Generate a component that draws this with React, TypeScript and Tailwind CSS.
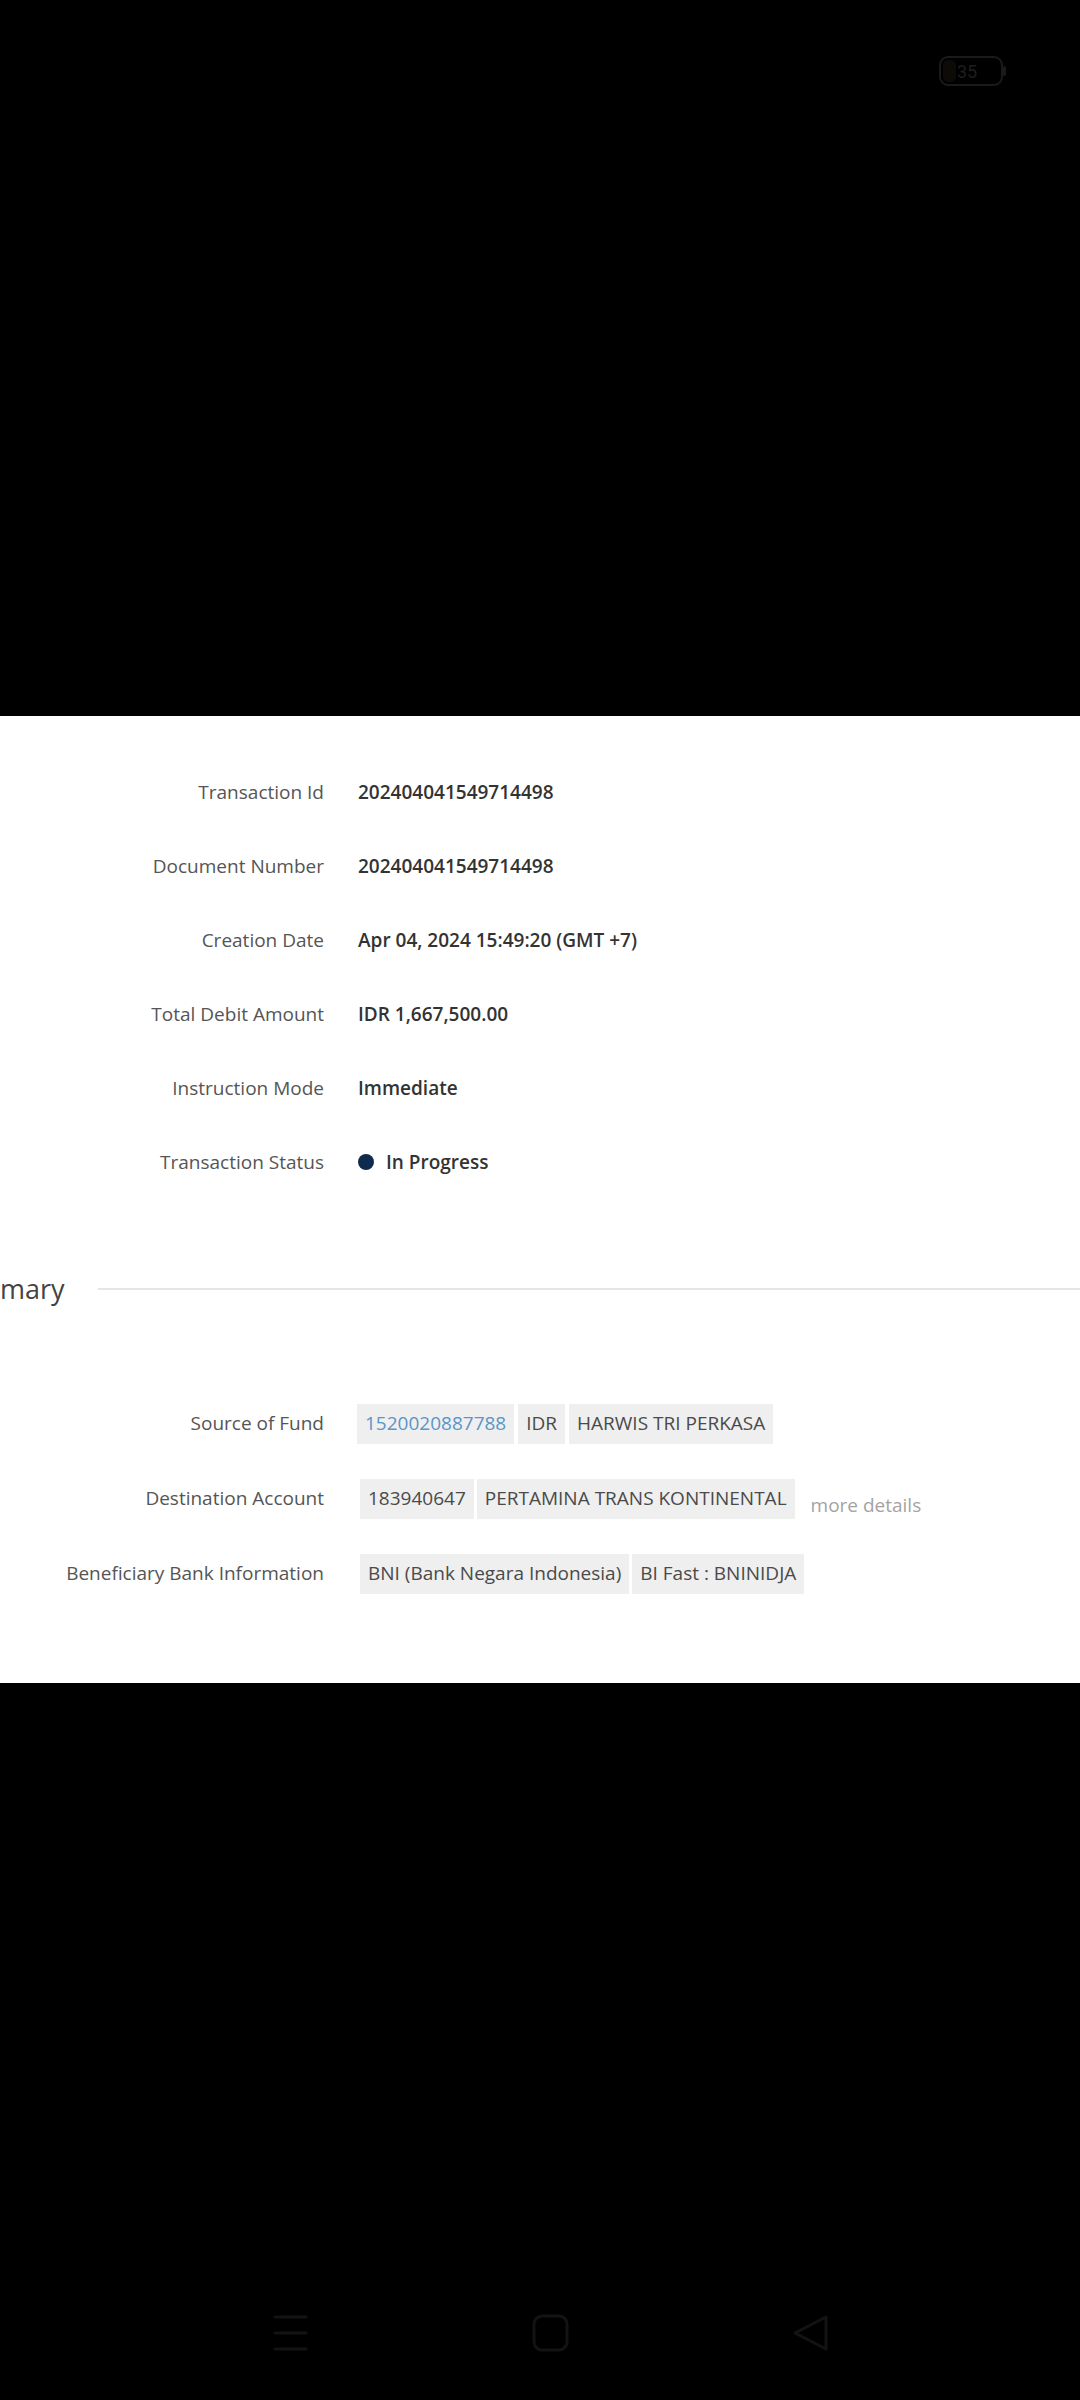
const summaryRows = [
  { label: "Transaction Id", value: "202404041549714498" },
  { label: "Document Number", value: "202404041549714498" },
  { label: "Creation Date", value: "Apr 04, 2024 15:49:20 (GMT +7)" },
  { label: "Total Debit Amount", value: "IDR 1,667,500.00" },
  { label: "Instruction Mode", value: "Immediate" },
];

function Chip({ children, link }: { children: React.ReactNode; link?: boolean }) {
  return (
    <span
      className={
        "h-[40px] px-[8px] flex items-center bg-[#efefef] whitespace-nowrap " +
        (link ? "text-[#5a96c8]" : "text-[#4a4a4a]")
      }
    >
      {children}
    </span>
  );
}

function Battery() {
  return (
    <svg width="68" height="30" viewBox="0 0 68 30" fill="none">
      <rect x="1" y="1" width="62" height="28" rx="8" stroke="#1a1a1a" strokeWidth="2" />
      <rect x="4" y="4" width="13" height="22" rx="5" fill="#0d0b07" />
      <rect x="64" y="10" width="3" height="10" rx="1.5" fill="#1a1a1a" />
      <text x="18" y="22" fill="#1e1e1e" fontSize="18" fontFamily="Roboto, sans-serif">
        35
      </text>
    </svg>
  );
}

export default function App() {
  return (
    <div className="w-[1080px] h-[2400px] bg-black flex flex-col overflow-hidden font-['Open_Sans',sans-serif]">
      {/* Status bar */}
      <div className="h-[716px] flex justify-end pt-[56px] pr-[73px]">
        <Battery />
      </div>

      {/* Detail panel */}
      <div className="h-[967px] bg-white flex flex-col overflow-hidden text-[19px]">
        <div className="pt-[39px] flex flex-col">
          {summaryRows.map((r) => (
            <div key={r.label} className="h-[74px] flex items-center">
              <div className="w-[324px] text-right text-[#555]">{r.label}</div>
              <div className="ml-[34px] font-semibold text-[#333]">{r.value}</div>
            </div>
          ))}
          <div className="h-[74px] flex items-center">
            <div className="w-[324px] text-right text-[#555]">Transaction Status</div>
            <div className="ml-[34px] flex items-center gap-[12px] font-semibold text-[#333]">
              <span className="w-[16px] h-[16px] rounded-full bg-[#0f2a4d]" />
              In Progress
            </div>
          </div>
        </div>

        {/* Section heading */}
        <div className="mt-[69px] h-[42px] flex items-center">
          <span className="text-[27px] text-[#444] whitespace-nowrap">mary</span>
          <div className="flex-1 ml-[33px] h-[2px] bg-[#e6e6e6]" />
        </div>

        <div className="mt-[76px] flex flex-col">
          <div className="h-[75px] flex items-center">
            <div className="w-[324px] text-right text-[#555]">Source of Fund</div>
            <div className="ml-[33px] flex gap-[4px]">
              <Chip link>1520020887788</Chip>
              <Chip>IDR</Chip>
              <Chip>HARWIS TRI PERKASA</Chip>
            </div>
          </div>
          <div className="h-[75px] flex items-center">
            <div className="w-[324px] text-right text-[#555]">Destination Account</div>
            <div className="ml-[36px] flex gap-[3px] items-center">
              <Chip>183940647</Chip>
              <Chip>PERTAMINA TRANS KONTINENTAL</Chip>
              <span className="ml-[13px] pt-[14px] text-[#a3a3a3]">more details</span>
            </div>
          </div>
          <div className="h-[75px] flex items-center">
            <div className="w-[324px] text-right text-[#555] whitespace-nowrap">
              Beneficiary Bank Information
            </div>
            <div className="ml-[36px] flex gap-[3px]">
              <Chip>BNI (Bank Negara Indonesia)</Chip>
              <Chip>BI Fast : BNINIDJA</Chip>
            </div>
          </div>
        </div>
      </div>

      {/* Navigation bar */}
      <div className="flex-1 flex items-end pb-[48px] pl-[273px] gap-[223px]">
        <svg width="36" height="38" viewBox="0 0 36 38" fill="none" stroke="#131313" strokeWidth="3" strokeLinecap="round">
          <path d="M2 3h31M2 19h31M2 35h31" />
        </svg>
        <svg width="37" height="38" viewBox="0 0 37 38" fill="none" stroke="#131313" strokeWidth="3">
          <rect x="2" y="2" width="33" height="34" rx="8" />
        </svg>
        <svg width="37" height="38" viewBox="0 0 37 38" fill="none" stroke="#131313" strokeWidth="3" strokeLinejoin="round">
          <path d="M34 3 L3 19 L34 35 Z" />
        </svg>
      </div>
    </div>
  );
}
